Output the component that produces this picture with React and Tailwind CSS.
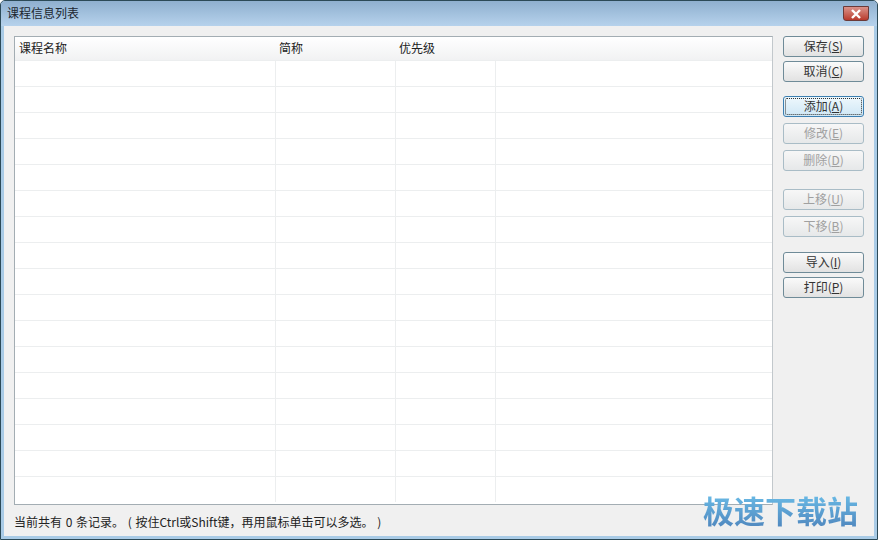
import React from 'react';

const rows = Array.from({ length: 17 });

const buttons = [
  { label: '保存', key: 'S', top: 'mt-0' },
  { label: '取消', key: 'C', top: 'mt-[4px]' },
  { label: '添加', key: 'A', top: 'mt-[14px]', focused: true },
  { label: '修改', key: 'E', top: 'mt-[6px]', disabled: true },
  { label: '删除', key: 'D', top: 'mt-[6px]', disabled: true },
  { label: '上移', key: 'U', top: 'mt-[18px]', disabled: true },
  { label: '下移', key: 'B', top: 'mt-[6px]', disabled: true },
  { label: '导入', key: 'I', top: 'mt-[15px]' },
  { label: '打印', key: 'P', top: 'mt-[4px]' },
];

const WinButton = ({ label, mnemonic, top, disabled, focused }) => (
  <button
    className={`${top} relative flex h-[21px] w-[81px] shrink-0 items-center justify-center rounded-[3px] border pb-[1px] text-[12px] leading-[16px] ${
      disabled
        ? 'border-[#a9bcc6] bg-gradient-to-b from-[#f7f7f7] to-[#e6e8e9] text-[#a0a0a0]'
        : focused
        ? 'border-[#3c7fb1] bg-gradient-to-b from-[#eef8fd] to-[#cfe7f5] text-[#333]'
        : 'border-[#6f8b98] bg-gradient-to-b from-[#fafafa] to-[#e2e2e2] text-[#333]'
    }`}
  >
    {focused && <span className="absolute inset-[1px] rounded-[2px] border border-dotted border-[#333]" />}
    <span>
      {label}(<span className="underline">{mnemonic}</span>)
    </span>
  </button>
);

const App = () => {
  return (
    <div
      className="relative flex h-[540px] w-[878px] flex-col overflow-hidden rounded-t-[5px] border border-[#2c4a57] bg-[#a9cbe6] text-[#222]"
      style={{ fontFamily: '"Noto Sans CJK SC", "Noto Sans", sans-serif' }}
    >
      <div className="flex h-[25px] shrink-0 items-start justify-between bg-gradient-to-b from-[#8fb0cf] to-[#b6d2ec] pl-[6px] pr-[8px]">
        <span className="mt-[4px] text-[12px] leading-[16px] text-[#1c2730]">课程信息列表</span>
        <div className="mt-[5px] flex h-[15px] w-[26px] items-center justify-center rounded-b-[3px] border border-[#6b3a38] bg-gradient-to-b from-[#d9928a] to-[#b8382c]">
          <svg width="12" height="10" viewBox="0 0 12 10">
            <path d="M2 1 L10 9 M10 1 L2 9" stroke="#fff" strokeWidth="2.4" />
          </svg>
        </div>
      </div>

      <div className="mx-[3px] mb-[3px] flex min-h-0 flex-1 flex-col bg-[#f0f0f0] pl-[10px] pr-[13px] pt-[10px]">
        <div className="flex h-[469px] shrink-0">
          <div className="h-full w-[759px] shrink-0 overflow-hidden border border-[#a3adb3] border-r-[#c2c8cc] bg-white">
            <div className="flex h-[23px] items-center bg-gradient-to-b from-white to-[#f1f2f3] pb-[2px] text-[12px] text-[#222]">
              <span className="w-[260px] pl-[4px]">课程名称</span>
              <span className="w-[120px] pl-[4px]">简称</span>
              <span className="w-[100px] pl-[4px]">优先级</span>
            </div>
            {rows.map((_, i) => (
              <div key={i} className="flex h-[26px] border-t border-[#eceeef]">
                <div className="w-[261px] border-r border-[#eceeef]" />
                <div className="w-[120px] border-r border-[#eceeef]" />
                <div className="w-[100px] border-r border-[#eceeef]" />
              </div>
            ))}
          </div>
          <div className="ml-[10px] flex flex-col">
            {buttons.map((b) => (
              <WinButton
                key={b.key}
                label={b.label}
                mnemonic={b.key}
                top={b.top}
                disabled={b.disabled}
                focused={b.focused}
              />
            ))}
          </div>
        </div>
        <div className="mt-[9px] whitespace-pre text-[12px] leading-[16px] text-[#222] [word-spacing:1px]">
          当前共有 0 条记录。 ( 按住Ctrl或Shift键，再用鼠标单击可以多选。 )
        </div>
      </div>

      <div className="absolute left-[702px] top-[490px] bg-gradient-to-b from-[#6cc0ea] to-[#4f86bd] bg-clip-text text-[31px] font-bold leading-[38px] text-transparent">
        极速下载站
      </div>
    </div>
  );
};

export default App;
